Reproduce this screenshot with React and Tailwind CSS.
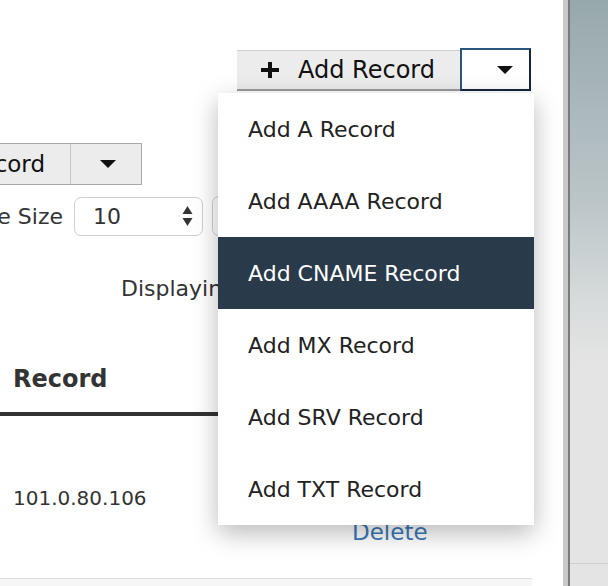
import React from 'react';

/**
 * DNS records page with the "Add Record" split button opened
 */
const menuItems = ['Add A Record', 'Add AAAA Record', 'Add CNAME Record', 'Add MX Record', 'Add SRV Record', 'Add TXT Record'];

const Caret = ({ className = '' }) => (
  <svg width="16" height="8" viewBox="0 0 16 8" className={className}>
    <path d="M0 0 H16 L8 8 Z" fill="#111" />
  </svg>
);

const App = () => {
  return (
    <div
      className="relative w-[608px] h-[586px] overflow-hidden flex bg-white text-[#333]"
      style={{ fontFamily: '"DejaVu Sans", Verdana, sans-serif' }}
    >
      {/* Main page */}
      <div className="relative w-[563px] h-full flex flex-col">
        {/* Add record split button */}
        <div className="flex justify-end pr-[32px] pt-[48px]">
          <div className="flex items-center">
            <button className="w-[223px] h-[41px] mt-[1px] flex items-center bg-[#ececec] border-t border-t-[#d0d0d0] border-b-2 border-b-[#9a9a9a] pl-[24px] text-[24px] text-[#111]">
              <svg width="18" height="16" viewBox="0 0 18 16" className="mr-[19px]">
                <path d="M7 0 H11 V6 H18 V10 H11 V16 H7 V10 H0 V6 H7 Z" fill="#111" />
              </svg>
              Add Record
            </button>
            <button className="w-[71px] h-[43px] bg-white border-2 border-[#2b5580] border-r-[#15263a] border-b-[#15263a] flex items-center justify-end pr-[16px]">
              <Caret />
            </button>
          </div>
        </div>

        {/* Record type filter */}
        <div className="flex mt-[52px] h-[42px] w-[142px] bg-[#ececec] border border-[#a8a8a8] border-l-0">
          <div className="w-[70px] overflow-hidden flex justify-end items-center pr-[25px] whitespace-nowrap text-[23px] text-[#111]">
            A Record
          </div>
          <div className="flex-1 border-l border-[#c4c4c4] flex items-center justify-center">
            <Caret className="ml-[4px]" />
          </div>
        </div>

        {/* Page size */}
        <div className="flex items-center mt-[11px] h-[40px]">
          <div className="w-[63px] overflow-hidden flex justify-end whitespace-nowrap text-[22px]">Page Size</div>
          <div className="ml-[11px] w-[129px] h-[39px] border border-[#cfcfcf] rounded-[7px] flex items-center justify-between pl-[18px] pr-[9px] text-[22px]">
            <span>10</span>
            <svg width="11" height="22" viewBox="0 0 11 22">
              <path d="M5.5 1 L10.5 9 H0.5 Z M5.5 21 L10.5 13 H0.5 Z" fill="#333" />
            </svg>
          </div>
          <div className="ml-[9px] w-[160px] h-[40px] border border-[#cfcfcf] rounded-[7px]" />
        </div>

        {/* Displaying text */}
        <div className="pl-[121px] mt-[42px] text-[22px] leading-none whitespace-nowrap">Displaying 1 - 1 of 1</div>

        {/* Table header */}
        <div className="mt-[67px] pl-[13px] text-[24px] font-bold leading-none">Record</div>
        <div className="mt-[21px] w-[480px] h-[4px] bg-[#333]" />

        {/* Row */}
        <div className="mt-[72px] pl-[13px] text-[20px] leading-none">101.0.80.106</div>
        <div className="mt-[13px] pl-[352px] text-[23px] leading-none text-[#3a7ab8]">Delete</div>

        <div className="mt-auto h-[8px] border-t border-[#dcdcdc] bg-[#f6f6f6] w-[532px]" />

        {/* Dropdown menu */}
        <div className="absolute left-[218px] top-[93px] w-[316px] bg-white shadow-[0_8px_24px_rgba(0,0,0,0.28)] z-10">
          {menuItems.map((item) => (
            <div
              key={item}
              className={`h-[72px] flex items-center pl-[30px] text-[22px] ${
                item === 'Add CNAME Record' ? 'bg-[#293a4b] text-white' : 'text-[#222]'
              }`}
            >
              {item}
            </div>
          ))}
        </div>
      </div>

      {/* Right side panel */}
      <div className="w-[5px] h-full bg-[#c8c8c8]" />
      <div className="w-[2px] h-full bg-[#7a7a7a]" />
      <div className="flex-1 h-full flex flex-col bg-[linear-gradient(to_bottom,#97a8ad_0%,#bcc6c9_35%,#d8dcdc_52%,#e4e4e4_62%,#e4e4e4_100%)]">
        <div className="mt-[563px] h-px bg-[#cfcfcf]" />
      </div>
    </div>
  );
};

export default App;
